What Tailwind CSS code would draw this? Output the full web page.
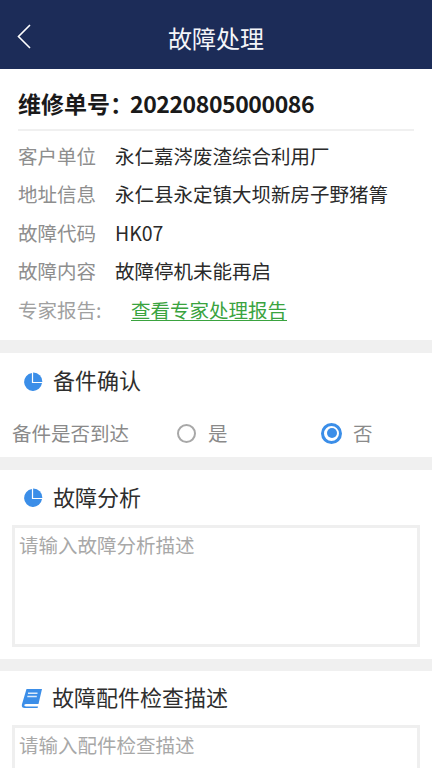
<!DOCTYPE html>
<html lang="zh">
<head>
    <meta charset="UTF-8">
    <title>故障处理</title>
    <script src="https://cdn.jsdelivr.net/npm/@tailwindcss/browser@4"></script>
</head>
<body class="bg-[#f0f0f0] font-['Noto_Sans_CJK_SC','Noto_Sans',sans-serif] h-[768px] overflow-hidden">
    <!-- Header -->
    <div class="relative h-[69px] bg-[#1c2c58] flex items-center justify-center">
        <svg class="absolute left-[17px] top-[24px]" width="14" height="25" viewBox="0 0 14 25" fill="none" stroke="#fff" stroke-width="1.6">
            <path d="M13 1L1.5 12.5L13 24"/>
        </svg>
        <div class="text-[24px] leading-[30px] text-[#f4f5f8] mt-[6px]">故障处理</div>
    </div>

    <!-- Order info -->
    <div class="bg-white h-[271px] px-[18px]">
        <div class="h-[62px] border-b-2 border-[#f0f0f0] flex items-center pt-[8px] whitespace-nowrap">
            <span class="text-[23px] font-bold text-[#1a1a1a] w-[112px] shrink-0">维修单号：</span>
            <span class="text-[23px] font-bold text-[#1a1a1a] tracking-[-0.42px]">20220805000086</span>
        </div>
        <div class="pt-[5px] text-[19.5px] text-[#2a2a2a]">
            <div class="h-[38.5px] flex items-center">
                <span class="w-[97px] text-[#8e8e8e]">客户单位</span>
                <span>永仁嘉涔废渣综合利用厂</span>
            </div>
            <div class="h-[38.5px] flex items-center">
                <span class="w-[97px] text-[#8e8e8e]">地址信息</span>
                <span>永仁县永定镇大坝新房子野猪箐</span>
            </div>
            <div class="h-[38.5px] flex items-center">
                <span class="w-[97px] text-[#8e8e8e]">故障代码</span>
                <span>HK07</span>
            </div>
            <div class="h-[38.5px] flex items-center">
                <span class="w-[97px] text-[#8e8e8e]">故障内容</span>
                <span>故障停机未能再启</span>
            </div>
            <div class="h-[38.5px] flex items-center">
                <span class="w-[113px] text-[#a0a0a0]">专家报告:</span>
                <span class="text-[#3aa33f] underline underline-offset-2">查看专家处理报告</span>
            </div>
        </div>
    </div>

    <!-- Parts confirm -->
    <div class="bg-white h-[104px] mt-[13px]">
        <div class="h-[56px] flex items-center pl-[23px] gap-[10px]">
            <svg class="mt-[1px]" width="20" height="20" viewBox="0 0 20 20">
                <path d="M8.9 1A9 9 0 1 0 19 11.1H8.9Z" fill="#3b8ee8"/>
                <path d="M10.1 0.6A9 9 0 0 1 19.4 9.9H10.1Z" fill="#3b8ee8"/>
            </svg>
            <span class="text-[22px] text-[#2e2e2e] -mt-[4px]">备件确认</span>
        </div>
        <div class="h-[48px] flex items-center pl-[12px] text-[19.5px] text-[#8a8a8a]">
            <span class="w-[165px]">备件是否到达</span>
            <span class="size-[19px] rounded-full border-[2.5px] border-[#a8a8a8] mr-[12px]"></span>
            <span class="w-[113px]">是</span>
            <span class="size-[21px] rounded-full border-[3px] border-[#3b8ee8] flex items-center justify-center mr-[11px]">
                <span class="size-[10px] rounded-full bg-[#3b8ee8]"></span>
            </span>
            <span>否</span>
        </div>
    </div>

    <!-- Fault analysis -->
    <div class="bg-white h-[189px] mt-[13px]">
        <div class="h-[55px] flex items-center pl-[23px] gap-[10px]">
            <svg width="20" height="20" viewBox="0 0 20 20">
                <path d="M8.9 1A9 9 0 1 0 19 11.1H8.9Z" fill="#3b8ee8"/>
                <path d="M10.1 0.6A9 9 0 0 1 19.4 9.9H10.1Z" fill="#3b8ee8"/>
            </svg>
            <span class="text-[22px] text-[#2e2e2e] -mt-[2px]">故障分析</span>
        </div>
        <div class="mx-[12px] h-[122px] border-[3px] border-[#efefef] px-[4px] pt-[1px] text-[19.5px] leading-[32px] text-[#a8a8a8]">请输入故障分析描述</div>
    </div>

    <!-- Parts inspection -->
    <div class="bg-white h-[97px] mt-[12px]">
        <div class="h-[54px] flex items-center pl-[21px] gap-[9px]">
            <svg width="22" height="21" viewBox="0 0 22 21">
                <path d="M5.5 1H21L17.5 16H5C3.6 16 3.2 17 3.4 17.6C3.6 18.2 4.2 18.4 5 18.4H17L16.6 20H3.8C1.6 20 0.4 18.6 0.9 16.4Z" fill="#3b8ee8"/>
                <path d="M7 5.2H16.5M6.3 8.4H15.8" stroke="#dcebfb" stroke-width="1.5"/>
            </svg>
            <span class="text-[22px] text-[#2e2e2e] -mt-[4px]">故障配件检查描述</span>
        </div>
        <div class="mx-[12px] h-[60px] border-[3px] border-[#efefef] px-[4px] pt-[1px] text-[19.5px] leading-[32px] text-[#a8a8a8]">请输入配件检查描述</div>
    </div>
</body>
</html>
